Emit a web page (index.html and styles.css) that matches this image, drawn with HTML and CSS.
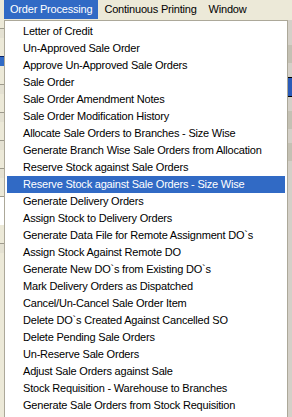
FILE: index.html
```html
<!DOCTYPE html>
<html lang="en">
<head>
    <meta charset="UTF-8">
    <title>Order Processing Menu</title>
    <link rel="stylesheet" href="styles.css">
</head>
<body>

    <div id="menuBar">
        <div class="menuTitle open">Order Processing</div>
        <div class="menuTitle">Continuous Printing</div>
        <div class="menuTitle">Window</div>
    </div>

    <!-- window underneath the menu -->
    <div id="workArea">
        <div class="pane left">
            <div class="row"></div>
            <div class="row blue"></div>
            <div class="row"></div>
            <div class="row"></div>
            <div class="row"></div>
            <div class="row"></div>
            <div class="row white"></div>
            <div class="row"></div>
        </div>
        <div class="pane right">
            <div class="bar"></div>
            <div class="bar blue"></div>
            <div class="bar"></div>
            <div class="bar"></div>
        </div>
    </div>

    <div id="dropDown">
        <div class="item">Letter of Credit</div>
        <div class="item">Un-Approved Sale Order</div>
        <div class="item">Approve Un-Approved Sale Orders</div>
        <div class="item">Sale Order</div>
        <div class="item">Sale Order Amendment Notes</div>
        <div class="item">Sale Order Modification History</div>
        <div class="item">Allocate Sale Orders to Branches - Size Wise</div>
        <div class="item">Generate Branch Wise Sale Orders from Allocation</div>
        <div class="item">Reserve Stock against Sale Orders</div>
        <div class="item selected">Reserve Stock against Sale Orders - Size Wise</div>
        <div class="item">Generate Delivery Orders</div>
        <div class="item">Assign Stock to Delivery Orders</div>
        <div class="item">Generate Data File for Remote Assignment DO`s</div>
        <div class="item">Assign Stock Against Remote DO</div>
        <div class="item">Generate New DO`s from Existing DO`s</div>
        <div class="item">Mark Delivery Orders as Dispatched</div>
        <div class="item">Cancel/Un-Cancel Sale Order Item</div>
        <div class="item">Delete DO`s Created Against Cancelled SO</div>
        <div class="item">Delete Pending Sale Orders</div>
        <div class="item">Un-Reserve Sale Orders</div>
        <div class="item">Adjust Sale Orders against Sale</div>
        <div class="item">Stock Requisition - Warehouse to Branches</div>
        <div class="item">Generate Sale Orders from Stock Requisition</div>
    </div>

</body>
</html>
```

FILE: styles.css
```css
body {
    margin: 0;
    padding: 0;
    width: 292px;
    height: 417px;
    overflow: hidden;
    position: relative;
    background-color: #ece9d8;
    font-family: "Liberation Sans", Arial, sans-serif;
    font-size: 11px;
    letter-spacing: -0.2px;
    color: #000;
}
#menuBar {
    height: 20px;
    display: flex;
    align-items: stretch;
    padding-left: 4px;
    background-color: #ece9d8;
}
.menuTitle {
    padding: 0 6px;
    line-height: 19px;
    height: 19px;
}
.menuTitle.open {
    background-color: #316ac5;
    color: white;
}
#workArea {
    display: flex;
    justify-content: space-between;
    height: 397px;
}
.pane.left {
    width: 5px;
    padding-top: 8px;
    display: flex;
    flex-direction: column;
    gap: 18px;
}
.pane.left .row {
    height: 9px;
    border-top: 1px solid #9d9a8c;
    background-color: #e4e1d2;
}
.pane.left .row.blue {
    background-color: #316ac5;
    border-top: 1px solid #0a246a;
}
.pane.left .row.white {
    background-color: #ffffff;
    height: 28px;
}
.pane.right {
    width: 4px;
    padding-top: 25px;
    display: flex;
    flex-direction: column;
    gap: 14px;
    background-color: #d4d0c8;
    border-left: 1px solid #b8b5a6;
}
.pane.right .bar {
    height: 18px;
    background-color: #c4c1b4;
}
.pane.right .bar.blue {
    background-color: #2a5bb8;
    border-top: 1px solid #000;
    border-bottom: 1px solid #000;
}
/* the open drop down */
#dropDown {
    position: absolute;
    left: 4px;
    top: 20px;
    width: 278px;
    height: 400px;
    padding: 2px 2px;
    background-color: #ffffff;
    border: 1px solid #aca899;
}
.item {
    height: 17px;
    line-height: 17px;
    padding-left: 16px;
    white-space: nowrap;
}
.item.selected {
    background-color: #316ac5;
    color: white;
}
```
